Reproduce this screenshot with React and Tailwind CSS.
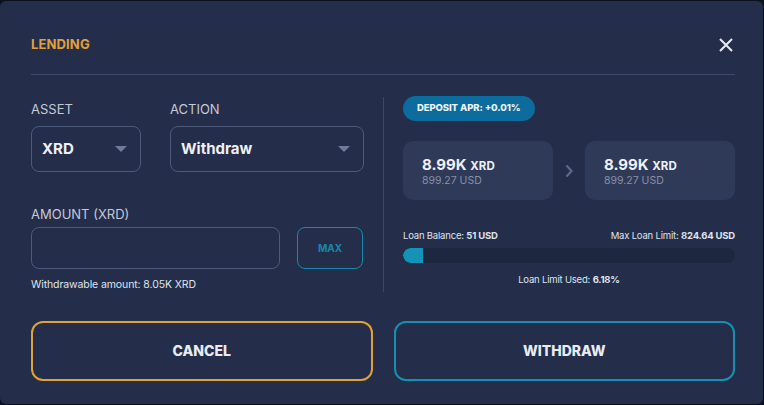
import React from "react";

function Caret() {
  return (
    <svg width="12" height="7" viewBox="0 0 12 7"><path d="M0 0h12L6 6z" fill="#6f7b98" /></svg>
  );
}

export default function App() {
  return (
    <div className="w-[764px] h-[405px] bg-[#0d111b] pt-px" style={{ fontFamily: "Inter, 'Noto Sans', sans-serif" }}>
      <div className="w-[763px] h-[403px] bg-[#242e4a] rounded-[6px] pl-[31px] pr-[28px] pt-[35px]">
        <div className="flex items-center justify-between h-[18px]">
          <div className="text-[13px] font-bold text-[#e2a137] tracking-[0.01em]">LENDING</div>
          <svg width="16" height="16" viewBox="0 0 16 16" className="mr-[1px]"><path d="M2 2L14 14M14 2L2 14" stroke="#e8ebf2" strokeWidth="2" /></svg>
        </div>
        <div className="mt-[20px] h-px bg-[#3f4a68]" />
        <div className="flex mt-[21px]">
          <div className="w-[332px] shrink-0">
            <div className="flex gap-[29px]">
              <div>
                <div className="text-[13px] text-[#c4c9d6] leading-[16px] mt-[5px]">ASSET</div>
                <div className="mt-[9px] w-[110px] h-[46px] border border-[#4e5a7a] rounded-[8px] flex items-center justify-between pl-[10px] pr-[13px]">
                  <span className="text-[15px] font-bold text-[#eef0f6]">XRD</span>
                  <Caret />
                </div>
              </div>
              <div>
                <div className="text-[13px] text-[#c4c9d6] leading-[16px] mt-[5px]">ACTION</div>
                <div className="mt-[9px] w-[194px] h-[46px] border border-[#4e5a7a] rounded-[8px] flex items-center justify-between pl-[10px] pr-[13px]">
                  <span className="text-[15px] font-bold text-[#eef0f6]">Withdraw</span>
                  <Caret />
                </div>
              </div>
            </div>
            <div className="mt-[34px] text-[13px] text-[#c4c9d6] leading-[16px]">AMOUNT (XRD)</div>
            <div className="flex gap-[17px] mt-[5px]">
              <div className="w-[249px] h-[42px] border border-[#4e5a7a] rounded-[8px]" />
              <div className="w-[66px] h-[42px] border border-[#1689a9] rounded-[8px] flex items-center justify-center text-[10px] font-bold text-[#1689a9]">MAX</div>
            </div>
            <div className="mt-[8px] text-[10.5px] text-[#dfe3ec] tracking-[-0.01em]">Withdrawable amount: 8.05K XRD</div>
          </div>
          <div className="w-px shrink-0 bg-[#3d4869] ml-[20px] mt-[1px] h-[195px]" />
          <div className="flex-1 pl-[19px]">
            <div className="flex w-fit items-center h-[25px] px-[14px] rounded-full bg-[#0c6c9d] text-[9.5px] font-extrabold text-[#eef2f8] tracking-[-0.01em]">DEPOSIT APR: +0.01%</div>
            <div className="flex items-center mt-[20px]">
              <div className="flex-1 h-[59px] rounded-[10px] bg-[#2f3a58] pl-[19px] pt-[15px]">
                <div className="text-[#eef0f6] font-bold leading-[16px]"><span className="text-[15px]">8.99K</span> <span className="text-[11.5px]">XRD</span></div>
                <div className="text-[10.5px] text-[#8690a9] leading-[14px]">899.27 USD</div>
              </div>
              <div className="w-[32px] flex justify-center">
                <svg width="8" height="14" viewBox="0 0 8 14"><path d="M1.5 1.5L6.5 7L1.5 12.5" stroke="#5d6988" strokeWidth="2.2" fill="none" /></svg>
              </div>
              <div className="flex-1 h-[59px] rounded-[10px] bg-[#2f3a58] pl-[19px] pt-[15px]">
                <div className="text-[#eef0f6] font-bold leading-[16px]"><span className="text-[15px]">8.99K</span> <span className="text-[11.5px]">XRD</span></div>
                <div className="text-[10.5px] text-[#8690a9] leading-[14px]">899.27 USD</div>
              </div>
            </div>
            <div className="flex justify-between mt-[30px] text-[9.5px] text-[#dfe3ec] tracking-[-0.02em] leading-[12px]">
              <span>Loan Balance: <b>51 USD</b></span>
              <span>Max Loan Limit: <b>824.64 USD</b></span>
            </div>
            <div className="mt-[6px] h-[15px] rounded-full bg-[#1d2740] overflow-hidden">
              <div className="h-full w-[20px] bg-[#1393b6] rounded-l-full" />
            </div>
            <div className="mt-[11px] text-center text-[9.5px] text-[#dfe3ec] tracking-[-0.02em] leading-[12px]">Loan Limit Used: <b>6.18%</b></div>
          </div>
        </div>
        <div className="flex gap-[21px] mt-[28px]">
          <div className="flex-1 h-[60px] border-2 border-[#e2a137] rounded-[12px] flex items-center justify-center text-[14px] font-extrabold text-[#e8ebf2]">CANCEL</div>
          <div className="flex-1 h-[60px] border-2 border-[#1590b3] rounded-[12px] flex items-center justify-center text-[14px] font-extrabold text-[#e8ebf2]">WITHDRAW</div>
        </div>
      </div>
    </div>
  );
}
